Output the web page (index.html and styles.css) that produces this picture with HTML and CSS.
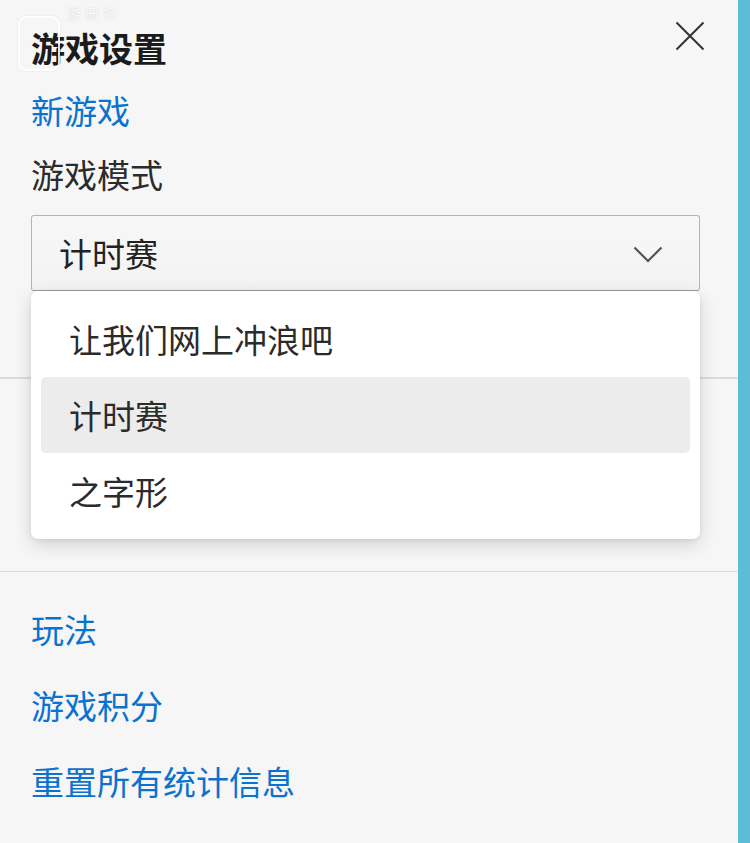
FILE: index.html
```html
<!DOCTYPE html>
<html lang="zh-CN">
<head>
<meta charset="utf-8">
<title>游戏设置</title>
<link rel="stylesheet" href="styles.css">
</head>
<body>
<div class="app">
  <div class="panel">
    <div class="watermark"><span class="wm-box"></span><span class="wm-text">游研社</span></div>
    <div class="header">
      <h1 class="title">游戏设置</h1>
      <button class="close" aria-label="关闭">
        <svg width="30" height="30" viewBox="0 0 30 30"><path d="M1.5 1.5 L28.5 28.5 M28.5 1.5 L1.5 28.5" stroke="#333" stroke-width="2" fill="none"/></svg>
      </button>
    </div>
    <div class="section">
      <a class="link new-game">新游戏</a>
      <div class="label">游戏模式</div>
      <div class="select-wrap">
        <div class="select">
          <span>计时赛</span>
          <svg class="chev" width="30" height="17" viewBox="0 0 30 17"><polyline points="1.5,1.5 15,15 28.5,1.5" stroke="#555" stroke-width="2.2" fill="none"/></svg>
        </div>
        <ul class="menu">
          <li class="item">让我们网上冲浪吧</li>
          <li class="item active">计时赛</li>
          <li class="item">之字形</li>
        </ul>
      </div>
    </div>
    <div class="divider first"></div>
    <div class="hidden-section"></div>
    <div class="divider"></div>
    <div class="links">
      <a class="link">玩法</a>
      <a class="link">游戏积分</a>
      <a class="link">重置所有统计信息</a>
    </div>
  </div>
  <div class="strip"></div>
</div>
</body>
</html>
```

FILE: styles.css
```css
* { box-sizing: border-box; }
html, body { margin: 0; padding: 0; }
body {
  font-family: "Noto Sans CJK SC", "Noto Sans", sans-serif;
  background: #f6f6f6;
}
.app {
  display: flex;
  width: 750px;
  height: 843px;
  overflow: hidden;
}
.panel {
  position: relative;
  width: 738px;
  height: 843px;
  background: #f6f6f6;
  display: flex;
  flex-direction: column;
}
.strip {
  width: 12px;
  height: 843px;
  background: #5dbcd8;
}
.watermark {
  position: absolute;
  left: 18px;
  top: 16px;
  display: flex;
  align-items: flex-start;
  pointer-events: none;
  z-index: 3;
}
.wm-box {
  width: 42px;
  height: 55px;
  border: 2px solid rgba(255, 255, 255, 0.85);
  border-radius: 8px;
  box-shadow: 0 0 1.5px rgba(0, 0, 0, 0.12);
}
.wm-text {
  margin-left: 7px;
  margin-top: -10px;
  font-size: 14px;
  line-height: 14px;
  color: rgba(255, 255, 255, 0.9);
  text-shadow: 0 0 1.5px rgba(0, 0, 0, 0.18);
  letter-spacing: 4px;
}
.header {
  display: flex;
  justify-content: space-between;
  align-items: flex-start;
  padding: 0 33px 0 31px;
}
.title {
  margin: 31px 0 3px;
  font-size: 34px;
  line-height: 34px;
  font-weight: 700;
  color: #1b1b1b;
}
.close {
  margin-top: 21px;
  padding: 0;
  border: 0;
  background: transparent;
  width: 30px;
  height: 30px;
  display: block;
}
.close svg { display: block; }
.section {
  display: flex;
  flex-direction: column;
  align-items: flex-start;
  padding: 0 39px 0 31px;
}
.link {
  display: block;
  font-size: 33px;
  line-height: 40px;
  color: #0b72cf;
  text-decoration: none;
}
.new-game { margin-top: 22px; }
.label {
  margin-top: 24px;
  font-size: 33px;
  line-height: 40px;
  color: #2b2b2b;
}
.select-wrap {
  position: relative;
  margin-top: 21px;
  width: 669px;
}
.select {
  height: 76px;
  display: flex;
  align-items: center;
  justify-content: space-between;
  padding: 0 36px 0 27px;
  border: 1.5px solid #b4b4b4;
  border-bottom-color: #9e9e9e;
  border-radius: 3px;
  background: linear-gradient(#f7f7f7, #f3f3f3);
  font-size: 33px;
  color: #222;
}
.chev { display: block; margin-top: 2px; }
.menu {
  position: absolute;
  left: 0;
  top: 76px;
  width: 669px;
  margin: 0;
  padding: 10px;
  list-style: none;
  background: #ffffff;
  border-radius: 7px;
  box-shadow: 0 6px 18px rgba(0, 0, 0, 0.14), 0 1px 4px rgba(0, 0, 0, 0.08);
  z-index: 2;
}
.item {
  height: 76px;
  display: flex;
  align-items: center;
  padding-left: 28px;
  font-size: 33px;
  color: #2b2b2b;
  border-radius: 5px;
}
.item.active { background: #ececec; }
.divider {
  height: 1.5px;
  background: #dcdcdc;
  width: 100%;
}
.divider.first { margin-top: 86px; }
.hidden-section { height: 192px; }
.links {
  display: flex;
  flex-direction: column;
  align-items: flex-start;
  gap: 36px;
  padding: 37px 39px 0 31px;
}
```
